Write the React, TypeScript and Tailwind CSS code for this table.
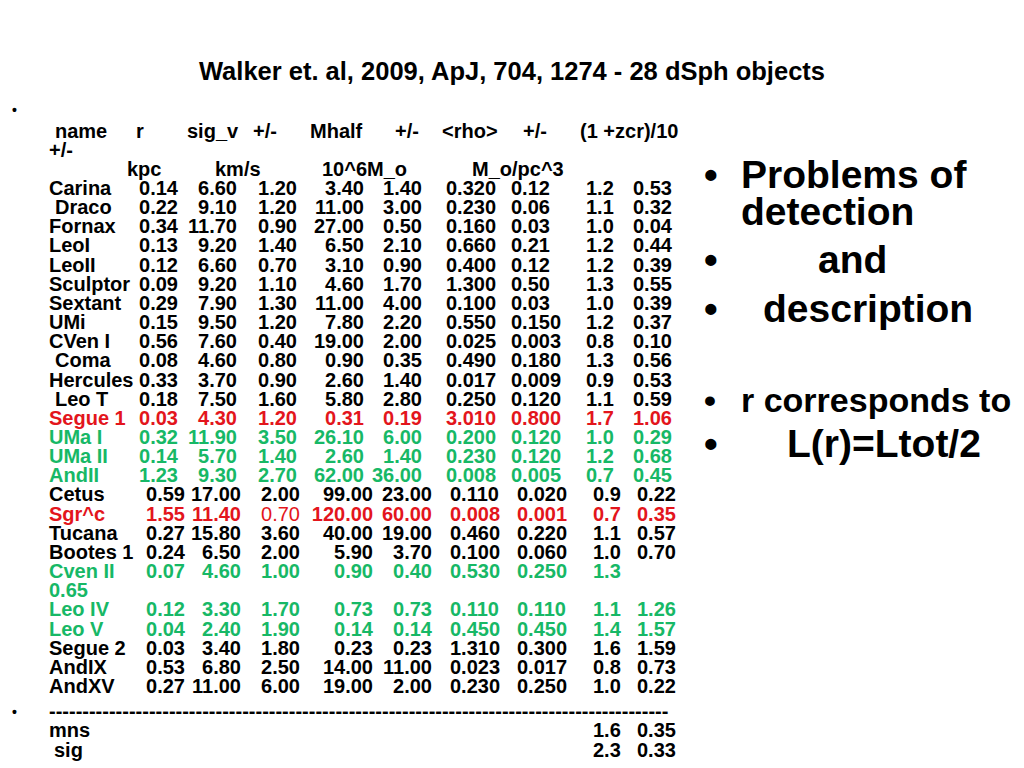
import React from 'react';

type Row = {
  name: string;
  vals: string[];
  color?: 'red' | 'green';
  wide?: boolean;
  indent?: boolean;
  thin?: number;
  wrap?: string;
};

const rows: Row[] = [
  { name: 'Carina', vals: ['0.14', '6.60', '1.20', '3.40', '1.40', '0.320', '0.12', '1.2', '0.53'] },
  { name: 'Draco', indent: true, vals: ['0.22', '9.10', '1.20', '11.00', '3.00', '0.230', '0.06', '1.1', '0.32'] },
  { name: 'Fornax', vals: ['0.34', '11.70', '0.90', '27.00', '0.50', '0.160', '0.03', '1.0', '0.04'] },
  { name: 'LeoI', vals: ['0.13', '9.20', '1.40', '6.50', '2.10', '0.660', '0.21', '1.2', '0.44'] },
  { name: 'LeoII', vals: ['0.12', '6.60', '0.70', '3.10', '0.90', '0.400', '0.12', '1.2', '0.39'] },
  { name: 'Sculptor', vals: ['0.09', '9.20', '1.10', '4.60', '1.70', '1.300', '0.50', '1.3', '0.55'] },
  { name: 'Sextant', vals: ['0.29', '7.90', '1.30', '11.00', '4.00', '0.100', '0.03', '1.0', '0.39'] },
  { name: 'UMi', vals: ['0.15', '9.50', '1.20', '7.80', '2.20', '0.550', '0.150', '1.2', '0.37'] },
  { name: 'CVen I', vals: ['0.56', '7.60', '0.40', '19.00', '2.00', '0.025', '0.003', '0.8', '0.10'] },
  { name: 'Coma', indent: true, vals: ['0.08', '4.60', '0.80', '0.90', '0.35', '0.490', '0.180', '1.3', '0.56'] },
  { name: 'Hercules', vals: ['0.33', '3.70', '0.90', '2.60', '1.40', '0.017', '0.009', '0.9', '0.53'] },
  { name: 'Leo T', indent: true, vals: ['0.18', '7.50', '1.60', '5.80', '2.80', '0.250', '0.120', '1.1', '0.59'] },
  { name: 'Segue 1', color: 'red', vals: ['0.03', '4.30', '1.20', '0.31', '0.19', '3.010', '0.800', '1.7', '1.06'] },
  { name: 'UMa I', color: 'green', vals: ['0.32', '11.90', '3.50', '26.10', '6.00', '0.200', '0.120', '1.0', '0.29'] },
  { name: 'UMa II', color: 'green', vals: ['0.14', '5.70', '1.40', '2.60', '1.40', '0.230', '0.120', '1.2', '0.68'] },
  { name: 'AndII', color: 'green', vals: ['1.23', '9.30', '2.70', '62.00', '36.00', '0.008', '0.005', '0.7', '0.45'] },
  { name: 'Cetus', wide: true, vals: ['0.59', '17.00', '2.00', '99.00', '23.00', '0.110', '0.020', '0.9', '0.22'] },
  { name: 'Sgr^c', color: 'red', wide: true, thin: 2, vals: ['1.55', '11.40', '0.70', '120.00', '60.00', '0.008', '0.001', '0.7', '0.35'] },
  { name: 'Tucana', wide: true, vals: ['0.27', '15.80', '3.60', '40.00', '19.00', '0.460', '0.220', '1.1', '0.57'] },
  { name: 'Bootes 1', wide: true, vals: ['0.24', '6.50', '2.00', '5.90', '3.70', '0.100', '0.060', '1.0', '0.70'] },
  { name: 'Cven II', color: 'green', wide: true, wrap: '0.65', vals: ['0.07', '4.60', '1.00', '0.90', '0.40', '0.530', '0.250', '1.3', ''] },
  { name: 'Leo IV', color: 'green', wide: true, vals: ['0.12', '3.30', '1.70', '0.73', '0.73', '0.110', '0.110', '1.1', '1.26'] },
  { name: 'Leo V', color: 'green', wide: true, vals: ['0.04', '2.40', '1.90', '0.14', '0.14', '0.450', '0.450', '1.4', '1.57'] },
  { name: 'Segue 2', wide: true, vals: ['0.03', '3.40', '1.80', '0.23', '0.23', '1.310', '0.300', '1.6', '1.59'] },
  { name: 'AndIX', wide: true, vals: ['0.53', '6.80', '2.50', '14.00', '11.00', '0.023', '0.017', '0.8', '0.73'] },
  { name: 'AndXV', wide: true, vals: ['0.27', '11.00', '6.00', '19.00', '2.00', '0.230', '0.250', '1.0', '0.22'] },
];

// column grids (narrow rows at the top, a bit wider from Cetus down)
const colA = 'grid grid-cols-[88px_41px_59px_60px_67px_58px_89px_75px_47px_60px]';
const colB = 'grid grid-cols-[88px_48px_56px_59px_73px_59px_85px_76px_44px_60px]';

function DataRow({ row }: { row: Row }) {
  const color =
    row.color === 'red' ? 'text-[#e3151c]' : row.color === 'green' ? 'text-[#17b866]' : 'text-black';
  const rhoPad = row.wide ? 'pl-[18px]' : 'pl-[24px]';
  return (
    <div className={color}>
      <div className={row.wide ? colB : colA}>
        <span className={`whitespace-nowrap ${row.indent ? 'pl-[6px]' : ''}`}>{row.name}</span>
        {row.vals.map((v, i) => (
          <span
            key={i}
            className={`whitespace-nowrap ${i < 5 ? 'text-right' : 'text-left'} ${i === 5 ? rhoPad : ''} ${
              row.thin === i ? 'font-normal' : ''
            }`}
          >
            {v}
          </span>
        ))}
      </div>
      {row.wrap && <div>{row.wrap}</div>}
    </div>
  );
}

function SideBullet({ text, size, pad, className }: { text: string; size: string; pad: string; className?: string }) {
  return (
    <div className={`flex leading-[37px] ${size} ${className ?? ''}`}>
      <span className="w-[41px] pl-[4px]">•</span>
      <div className={pad}>{text}</div>
    </div>
  );
}

export default function App() {
  return (
    <div className="w-[1024px] h-[768px] bg-white text-black font-bold font-['Liberation_Sans',Arial,sans-serif] overflow-hidden">
      <div className="pt-[56px] text-[25.5px] leading-[30px] text-center">
        Walker et. al, 2009, ApJ, 704, 1274 - 28 dSph objects
      </div>

      <div className="flex">
        <div className="w-[700px] mt-[9px] text-[20px] leading-[19.15px]">
          <div className="h-[24px] flex items-center pl-[12px] pt-[5px]">
            <span className="text-[14px] leading-none">•</span>
          </div>
          <div className="pl-[49px] mt-[2.5px]">
            <div className="flex whitespace-nowrap">
              <span className="w-[87px] pl-[6px]">name</span>
              <span className="w-[51px]">r</span>
              <span className="w-[66px]">sig_v</span>
              <span className="w-[57px]">+/-</span>
              <span className="w-[85px]">Mhalf</span>
              <span className="w-[47px]">+/-</span>
              <span className="w-[81px]">&lt;rho&gt;</span>
              <span className="w-[57px]">+/-</span>
              <span>(1 +zcr)/10</span>
            </div>
            <div>+/-</div>
            <div className="flex whitespace-nowrap">
              <span className="w-[78px]"></span>
              <span className="w-[88px]">kpc</span>
              <span className="w-[107px]">km/s</span>
              <span className="w-[150px]">10^6M_o</span>
              <span>M_o/pc^3</span>
            </div>
            {rows.map((r) => (
              <DataRow key={r.name} row={r} />
            ))}
          </div>

          <div className="flex mt-[6px]">
            <div className="w-[49px] pl-[12px] flex items-center">
              <span className="text-[14px] leading-none">•</span>
            </div>
            <div className="whitespace-nowrap">{'-'.repeat(93)}</div>
          </div>
          <div className="pl-[49px]">
            <div className="flex whitespace-nowrap">
              <span className="w-[544px]">mns</span>
              <span className="w-[44px]">1.6</span>
              <span>0.35</span>
            </div>
            <div className="flex whitespace-nowrap">
              <span className="w-[544px] pl-[5px]">sig</span>
              <span className="w-[44px]">2.3</span>
              <span>0.33</span>
            </div>
          </div>
        </div>

        <div className="flex-1 pt-[70px] whitespace-nowrap">
          <div className="flex text-[39px] leading-[37px]">
            <span className="w-[41px] pl-[4px]">•</span>
            <div>
              <div>Problems of</div>
              <div>detection</div>
            </div>
          </div>
          <SideBullet text="and" size="text-[39px]" pad="pl-[77px]" className="mt-[11px]" />
          <SideBullet text="description" size="text-[39px]" pad="pl-[22px]" className="mt-[12px]" />
          <SideBullet text="r corresponds to" size="text-[34px]" pad="" className="mt-[55px]" />
          <SideBullet text="L(r)=Ltot/2" size="text-[39px]" pad="pl-[46px]" className="mt-[6px]" />
        </div>
      </div>
    </div>
  );
}
